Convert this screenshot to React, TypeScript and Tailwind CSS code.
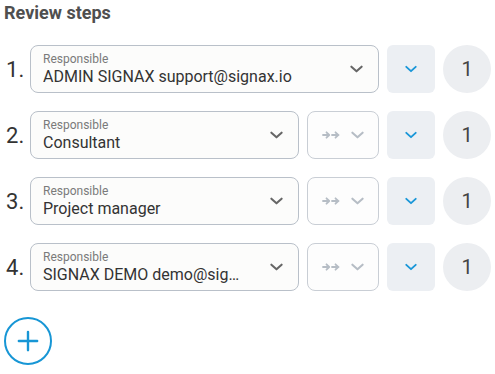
const steps = [
  { value: "ADMIN SIGNAX support@signax.io", wide: true },
  { value: "Consultant", wide: false },
  { value: "Project manager", wide: false },
  { value: "SIGNAX DEMO demo@signax.io", wide: false },
];

function Chevron({ className }: { className: string }) {
  return (
    <svg viewBox="0 0 14 8" className={className} fill="none" stroke="currentColor" strokeWidth="2.2" strokeLinecap="round" strokeLinejoin="round">
      <path d="M1.5 1.5 7 6.5l5.5-5" />
    </svg>
  );
}

function DoubleArrow() {
  return (
    <svg viewBox="0 0 18 8" className="w-[18px] h-[8px]" fill="none" stroke="currentColor" strokeWidth="1.8" strokeLinecap="round" strokeLinejoin="round">
      <path d="M1 4h6M4.5 1.3 7.2 4 4.5 6.7M10 4h6.5M13.5 1.3 16.2 4l-2.7 2.7" />
    </svg>
  );
}

export default function App() {
  return (
    <main className="w-[495px] h-[374px] bg-white px-1 pt-[1px] font-['Roboto',sans-serif]">
      <h2 className="text-[18px] leading-6 font-bold text-[#4f4f4f]">Review steps</h2>

      <div className="mt-5 flex flex-col gap-[18px]">
        {steps.map((s, i) => (
          <div key={i} className="flex items-center h-12">
            <div className="w-[26px] pl-[2px] text-[22px] text-[#333]">{i + 1}.</div>

            <div
              className={
                "h-12 flex items-center rounded-lg border border-[#b9c0c9] bg-[#fcfcfb] pl-3 pr-[15px] " +
                (s.wide ? "w-[349px]" : "w-[269px]")
              }
            >
              <div className="flex-1 min-w-0 mr-[24px]">
                <div className="text-[12px] leading-[14px] text-[#7a7a7a]">Responsible</div>
                <div className="mt-[1px] text-[16px] leading-5 text-[#333] truncate">{s.value}</div>
              </div>
              <Chevron className="w-[13px] h-[8px] text-[#666]" />
            </div>

            {!s.wide && (
              <div className="ml-2 w-[72px] h-12 rounded-lg border border-[#c9ced5] bg-[#fdfdfd] flex items-center justify-center gap-[11px] text-[#b6bdc5]">
                <DoubleArrow />
                <Chevron className="w-[13px] h-[8px]" />
              </div>
            )}

            <button className="ml-2 w-12 h-12 rounded-md bg-[#eceff3] flex items-center justify-center text-[#1a97d8]">
              <Chevron className="w-[12px] h-[8px]" />
            </button>

            <div className="ml-2 w-12 h-12 rounded-full bg-[#eceef1] flex items-center justify-center text-[20px] text-[#444]">
              1
            </div>
          </div>
        ))}
      </div>

      <button className="mt-[26px] w-12 h-12 rounded-full border-2 border-[#1796d5] flex items-center justify-center text-[#1796d5]">
        <svg viewBox="0 0 24 24" className="w-[22px] h-[22px]" fill="none" stroke="currentColor" strokeWidth="2.6" strokeLinecap="round">
          <path d="M12 2v20M2 12h20" />
        </svg>
      </button>
    </main>
  );
}
